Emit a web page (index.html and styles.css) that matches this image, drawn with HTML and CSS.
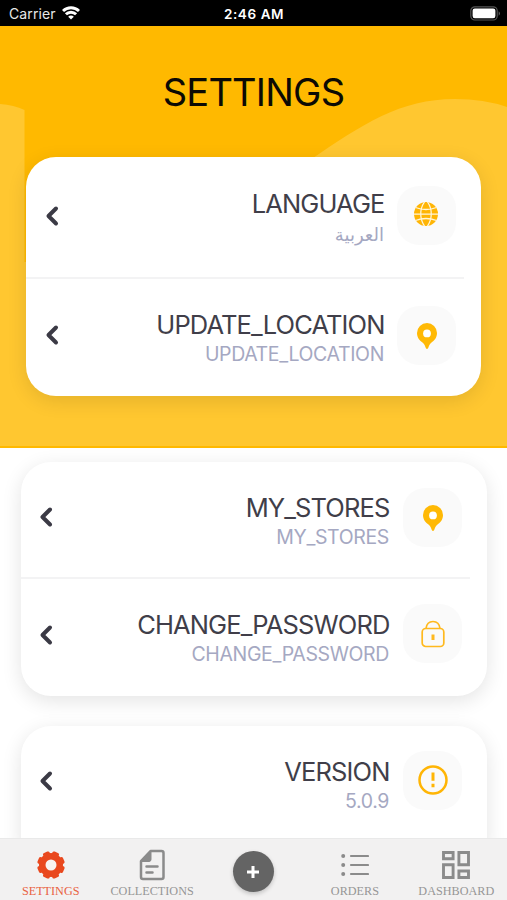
FILE: index.html
```html
<!DOCTYPE html>
<html lang="en">
<head>
<meta charset="utf-8">
<title>Settings</title>
<link rel="stylesheet" href="styles.css">
</head>
<body>
<div class="app">
  <header class="status">
    <div class="carrier"><span>Carrier</span>
      <svg width="18" height="14" viewBox="0 0 18 14" fill="none" stroke="#fff" stroke-width="2.9"><path d="M1 5.100a11.300 11.300 0 0 1 16 0M3.900 8.300a7.200 7.200 0 0 1 10.200 0"/><path d="M9 13.600 6.200 10.800a3.900 3.900 0 0 1 5.600 0z" fill="#fff" stroke="none"/></svg>
    </div>
    <div class="time">2:46 AM</div>
    <svg class="battery" width="31" height="15" viewBox="0 0 31 15"><rect x=".8" y=".8" width="26.4" height="13.2" rx="4" fill="none" stroke="#555" stroke-width="1.2"/><rect x="2.6" y="2.6" width="22.8" height="9.6" rx="2.2" fill="#fff"/><path d="M28.7 5.2q2.4 2.2 0 4.5z" fill="#666"/></svg>
  </header>

  <section class="hero">
    <svg class="hero-art" width="507" height="422" viewBox="0 0 507 422"><path d="M0 78Q14 79 24.500 84V236H100V420H0zM310 134C363 98 400 73 455 73Q484 73 507 81V420H100V134z" fill="#ffc730"/></svg>
    <h1>SETTINGS</h1>
    <div class="card card-hero">
      <div class="row row-language">
        <svg class="chevron" width="14" height="22" viewBox="0 0 14 22"><path d="M11 3.500 3.500 11 11 18.500"/></svg>
        <div class="text"><div class="title">LANGUAGE</div><div class="sub arabic" lang="ar" dir="rtl">العربية</div></div>
        <div class="icon"><svg width="24" height="24" viewBox="0 0 24 24"><circle cx="12" cy="12" r="12" fill="#ffb505"/><path d="M0 12h24M1.500 5.500q10.500 4 21 0M1.500 18.500q10.500-4 21 0M10.500 0C5.500 7 5.500 17 10.500 24M13.500 0C18.500 7 18.500 17 13.500 24" fill="none" stroke="#fff6dc" stroke-width="1.250"/></svg></div>
      </div>
      <div class="row row-location">
        <svg class="chevron" width="14" height="22" viewBox="0 0 14 22"><path d="M11 3.500 3.500 11 11 18.500"/></svg>
        <div class="text"><div class="title">UPDATE_LOCATION</div><div class="sub">UPDATE_LOCATION</div></div>
        <div class="icon"><svg width="20" height="26" viewBox="0 0 20 26"><path d="M10 0a10 10 0 0 1 10 10c0 5-3 7.500-5.500 9.500-2 1.600-2.500 3.300-3.300 5.400q-1.200 2-2.400 0C8 22.800 7.500 21.100 5.500 19.500 3 17.500 0 15 0 10A10 10 0 0 1 10 0z" fill="#ffb905"/><circle cx="10" cy="10.400" r="3.900" fill="#fff"/></svg></div>
      </div>
    </div>
  </section>

  <main class="content">
    <div class="card">
      <div class="row row-stores">
        <svg class="chevron" width="14" height="22" viewBox="0 0 14 22"><path d="M11 3.500 3.500 11 11 18.500"/></svg>
        <div class="text"><div class="title">MY_STORES</div><div class="sub">MY_STORES</div></div>
        <div class="icon"><svg width="20" height="26" viewBox="0 0 20 26"><path d="M10 0a10 10 0 0 1 10 10c0 5-3 7.500-5.500 9.500-2 1.600-2.500 3.300-3.300 5.400q-1.200 2-2.400 0C8 22.800 7.500 21.100 5.500 19.500 3 17.500 0 15 0 10A10 10 0 0 1 10 0z" fill="#ffb905"/><circle cx="10" cy="10.400" r="3.900" fill="#fff"/></svg></div>
      </div>
      <div class="row row-password">
        <svg class="chevron" width="14" height="22" viewBox="0 0 14 22"><path d="M11 3.500 3.500 11 11 18.500"/></svg>
        <div class="text"><div class="title">CHANGE_PASSWORD</div><div class="sub">CHANGE_PASSWORD</div></div>
        <div class="icon"><svg width="24" height="28" viewBox="0 0 24 28" fill="none" stroke="#ffb91e" stroke-width="1.700"><rect x="1.200" y="8.500" width="21.600" height="18" rx="3.500"/><path d="M5 8.500C5.500 4.500 8 1.500 12 1.500s6.500 3 7 7"/><path d="M12 14.500v5.500" stroke-width="3"/></svg></div>
      </div>
    </div>
    <div class="card card-last">
      <div class="row row-version">
        <svg class="chevron" width="14" height="22" viewBox="0 0 14 22"><path d="M11 3.500 3.500 11 11 18.500"/></svg>
        <div class="text"><div class="title">VERSION</div><div class="sub">5.0.9</div></div>
        <div class="icon"><svg width="30" height="30" viewBox="0 0 30 30" fill="none" stroke="#ffb505"><circle cx="15" cy="15" r="13.500" stroke-width="2.500"/><path d="M15 7.500v8.300M15 18.800v3.400" stroke-width="3"/></svg></div>
      </div>
    </div>
  </main>

  <nav class="tabs">
    <a class="tab active"><svg width="28" height="28" viewBox="0 0 28 28"><g fill="#e9481e"><circle cx="14" cy="14" r="12"/><rect x="10.500" y=".2" width="7" height="27.600" rx="1.800" transform="rotate(22.500 14 14)"/><rect x="10.500" y=".2" width="7" height="27.600" rx="1.800" transform="rotate(67.500 14 14)"/><rect x="10.500" y=".2" width="7" height="27.600" rx="1.800" transform="rotate(112.500 14 14)"/><rect x="10.500" y=".2" width="7" height="27.600" rx="1.800" transform="rotate(157.500 14 14)"/></g><circle cx="14" cy="14" r="5.500" fill="#f8f3f1"/></svg><span>SETTINGS</span></a>
    <a class="tab"><svg width="26" height="32" viewBox="0 0 26 32" fill="none" stroke="#8b8b8b" stroke-width="2.500"><path d="M11.500 2H22.500Q24.500 2 24.500 4V28Q24.500 30 22.500 30H4Q2 30 2 28V12z" stroke-linejoin="round"/><path d="M12 2V10.500Q12 12.500 10 12.500H2z" fill="#8b8b8b" stroke-width="1"/><path d="M7.500 17.500h11M7.500 23.500h6" stroke-linecap="round"/></svg><span>COLLECTIONS</span></a>
    <a class="tab tab-add"><div class="add"><svg width="14" height="14" viewBox="0 0 14 14"><path d="M7 1v12M1 7h12" stroke="#fff" stroke-width="3"/></svg></div></a>
    <a class="tab"><svg width="28" height="24" viewBox="0 0 28 24" fill="#8b8b8b"><circle cx="2.200" cy="3" r="2"/><circle cx="2.200" cy="12" r="2"/><circle cx="2.200" cy="21" r="2"/><path d="M10 3h17M10 12h17M10 21h17" stroke="#8b8b8b" stroke-width="2.200" stroke-linecap="round"/></svg><span>ORDERS</span></a>
    <a class="tab"><svg width="28" height="28" viewBox="0 0 28 28" fill="none" stroke="#8b8b8b" stroke-width="2.900"><path d="M1.500 1.500h9.600v6.300H1.500zM16.900 1.500h9.600v12.300h-9.600zM1.500 13.700h9.600v12.800H1.500zM16.900 20h9.600v6.500h-9.600z"/></svg><span>DASHBOARD</span></a>
  </nav>
</div>
</body>
</html>
```
FILE: styles.css
```css
* { box-sizing: border-box; }
body { margin: 0; background: #fff; font-family: Inter, "Noto Sans", sans-serif; }
svg { display: block; flex: none; }
.app { width: 507px; height: 900px; overflow: hidden; display: flex; flex-direction: column; }

.status { height: 26px; flex: none; background: #000; color: #e8e8e8; display: grid; grid-template-columns: 1fr auto 1fr; align-items: center; padding: 1px 6px 0 9px; font-size: 14px; }
.carrier { display: flex; align-items: center; gap: 6px; letter-spacing: .1px; }
.carrier svg { margin-top: -2px; }
.time { font-weight: 600; font-size: 13.5px; color: #fff; letter-spacing: .6px; margin-right: 2px; }
.battery { justify-self: end; }

.hero { position: relative; flex: none; height: 422px; background: #ffb900; padding: 0 26px; }
.hero-art { position: absolute; left: 0; top: 0; }
h1 { position: relative; margin: 0; height: 131px; padding-top: 42px; font-size: 38px; line-height: 48px; font-weight: 400; text-align: center; color: #0c0a04; letter-spacing: -.8px; }

.card { position: relative; background: #fff; border-radius: 30px; box-shadow: 0 5px 20px rgba(0, 0, 0, .11); }
.card-hero { height: 239px; }
.row { position: relative; display: flex; align-items: flex-start; padding-right: 25px; padding-left: 19px; }
.row:not(:last-child) { border-bottom: 2px solid transparent; border-image: linear-gradient(to right, #f3f3f4 calc(100% - 19px), transparent 0) 2; }
.row-language { height: 122px; padding-top: 29px; }
.row-location { height: 117px; padding-top: 27px; }
.row-stores { height: 117px; padding-top: 26px; }
.row-password { height: 117px; padding-top: 25px; }
.row-version { height: 140px; padding-top: 25px; }
.chevron { margin-top: 19px; fill: none; stroke: #3b3a45; stroke-width: 4; stroke-linecap: round; stroke-linejoin: round; }
.row-location .chevron, .row-stores .chevron { margin-top: 18px; }
.row-password .chevron { margin-top: 20px; }
.text { flex: 1; padding-top: 4px; text-align: right; margin-right: 13px; }
.row-language .text { padding-top: 3px; }
.row-stores .text { padding-top: 5px; }
.row-password .text, .row-version .text { padding-top: 6px; }
.title { font-size: 25.5px; line-height: 30px; color: #403e49; letter-spacing: -.87px; margin-right: -.5px; }
.sub { font-size: 19.5px; line-height: 28px; color: #a5a8c2; letter-spacing: -.36px; }
.arabic { font-family: "DejaVu Sans", "Noto Sans", sans-serif; font-size: 18px; letter-spacing: 0; line-height: 32px; }
.icon { width: 59px; height: 59px; border-radius: 22px; background: #fafafa; display: flex; align-items: center; justify-content: center; }
.row-language .icon { padding: 0 2px 3px 0; }
.row-version .icon { padding-bottom: 2px; }

.content { flex: 1; min-height: 0; padding: 14px 20px 0 21px; display: flex; flex-direction: column; gap: 30px; overflow: hidden; }
.content .card { flex: none; }
.content .row { padding-left: 18px; padding-right: 25px; }
.content .text { margin-right: 14px; }

.tabs { position: relative; height: 62px; flex: none; background: #f2f1f1; border-top: 1px solid #e9e9e9; display: grid; grid-template-columns: repeat(5, 1fr); }
.tab { display: grid; height: 61px; grid-template-rows: 43px 16px; justify-items: center; align-items: center; padding-top: 1px; font-family: "Liberation Serif", serif; font-size: 12.2px; color: #969696; }
.tab svg { margin-top: 7px; }
.tab span { line-height: 16px; }
.tab.active { color: #e96243; }
.tab-add { display: flex; align-items: center; justify-content: center; padding-top: 4px; }
.add { width: 41px; height: 41px; border-radius: 50%; background: #646464; display: flex; align-items: center; justify-content: center; box-shadow: 0 2px 4px rgba(0, 0, 0, .2); }
.add svg { margin: 0; }
```
